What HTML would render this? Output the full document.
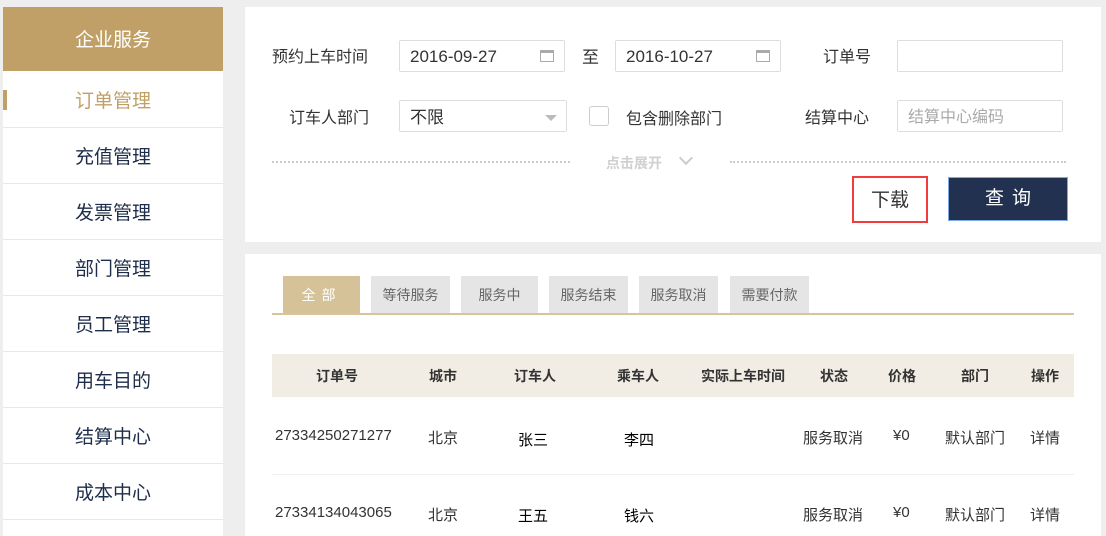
<!DOCTYPE html>
<html><head><meta charset="utf-8"><style>
*{margin:0;padding:0;box-sizing:border-box}
html{width:1106px;height:536px;overflow:hidden}
body{width:1106px;height:536px;background:#eeeeee;position:relative;overflow:hidden;font-family:"Liberation Sans","Noto Sans CJK SC",sans-serif;color:#333}
.a{position:absolute}
.side{left:3px;top:7px;width:220px;height:540px;background:#fff}
.sh{left:3px;top:7px;width:220px;height:64px;background:#c0a067;color:#fff;font-size:19px;text-align:center;line-height:68px}
.si{left:3px;width:220px;height:56px;border-bottom:1px solid #e8e8e8;text-align:center;line-height:59px;font-size:19px;color:#1e2d4a}
.p{background:#fff;left:245px;width:856px}
.lbl{font-size:16px;color:#333}
.inp{border:1px solid #ddd;border-radius:2px;height:32px;background:#fff;font-size:17px;line-height:31px;padding-left:10px;color:#333}
.cal{position:absolute;right:10px;top:9px;width:14px;height:12px;border:1px solid #aaa;border-top:3px solid #aaa}
.dots{border-top:2px dotted #ccc;height:0}
.tab{top:276px;height:37px;background:#e5e5e5;color:#666;font-size:14px;text-align:center;line-height:38px}
.th{top:354px;font-size:14px;font-weight:bold;color:#333;line-height:45px;transform:translateX(-50%)}
.td{font-size:15px;color:#333}
</style></head><body>
<div class="a side"></div>
<div class="a sh">企业服务</div>
<div class="a si" style="top:72px;color:#c0a067">订单管理</div>
<div class="a" style="left:3px;top:90px;width:4px;height:20px;background:#c0a067"></div>
<div class="a si" style="top:128px">充值管理</div>
<div class="a si" style="top:184px">发票管理</div>
<div class="a si" style="top:240px">部门管理</div>
<div class="a si" style="top:296px">员工管理</div>
<div class="a si" style="top:352px">用车目的</div>
<div class="a si" style="top:408px">结算中心</div>
<div class="a si" style="top:464px">成本中心</div>

<div class="a p" style="top:7px;height:235px"></div>
<div class="a lbl" style="left:272px;top:43px">预约上车时间</div>
<div class="a inp" style="left:399px;top:40px;width:166px">2016-09-27<span class="cal"></span></div>
<div class="a lbl" style="left:582px;top:43px;font-size:17px">至</div>
<div class="a inp" style="left:615px;top:40px;width:166px">2016-10-27<span class="cal"></span></div>
<div class="a lbl" style="left:823px;top:43px">订单号</div>
<div class="a inp" style="left:897px;top:40px;width:166px"></div>
<div class="a lbl" style="left:289px;top:104px">订车人部门</div>
<div class="a inp" style="left:399px;top:100px;width:168px;line-height:33px">不限<span style="position:absolute;right:9px;top:14px;border:6px solid transparent;border-top:6px solid #bbb;border-bottom:0"></span></div>
<div class="a" style="left:589px;top:106px;width:20px;height:20px;border:1px solid #ccc;border-radius:3px"></div>
<div class="a lbl" style="left:626px;top:105px">包含删除部门</div>
<div class="a lbl" style="left:805px;top:104px">结算中心</div>
<div class="a inp" style="left:897px;top:100px;width:166px;color:#aaa;font-size:16px;line-height:33px">结算中心编码</div>
<div class="a dots" style="left:272px;top:161px;width:298px"></div>
<div class="a dots" style="left:730px;top:161px;width:336px"></div>
<div class="a" style="left:606px;top:153px;font-size:14px;color:#d0d0d0;font-weight:bold">点击展开</div>
<div class="a" style="left:681px;top:153px;width:10px;height:10px;border-right:2px solid #ccc;border-bottom:2px solid #ccc;transform:rotate(45deg)"></div>
<div class="a" style="left:852px;top:176px;width:76px;height:47px;border:2px solid #f03c3c;text-align:center;line-height:45px;font-size:19px;color:#333">下载</div>
<div class="a" style="left:948px;top:177px;width:120px;height:44px;background:#22314f;border:1px solid #7fa8e8;color:#fff;text-align:center;line-height:42px;font-size:19px;letter-spacing:8px;text-indent:8px">查询</div>

<div class="a p" style="top:254px;height:290px"></div>
<div class="a tab" style="left:283px;width:77px;background:#d6c299;color:#fff;letter-spacing:6px">全部</div>
<div class="a tab" style="left:371px;width:79px">等待服务</div>
<div class="a tab" style="left:461px;width:77px">服务中</div>
<div class="a tab" style="left:549px;width:79px">服务结束</div>
<div class="a tab" style="left:639px;width:79px">服务取消</div>
<div class="a tab" style="left:730px;width:79px">需要付款</div>
<div class="a" style="left:272px;top:313px;width:802px;height:2px;background:#d8c49a"></div>
<div class="a" style="left:272px;top:354px;width:802px;height:43px;background:#f2ede4"></div>
<div class="a th" style="left:337px">订单号</div>
<div class="a th" style="left:443px">城市</div>
<div class="a th" style="left:535px">订车人</div>
<div class="a th" style="left:638px">乘车人</div>
<div class="a th" style="left:743px">实际上车时间</div>
<div class="a th" style="left:834px">状态</div>
<div class="a th" style="left:902px">价格</div>
<div class="a th" style="left:975px">部门</div>
<div class="a th" style="left:1045px">操作</div>
<div class="a" style="left:272px;top:474px;width:802px;height:1px;background:#f0f0f0"></div>
<div class="a td" style="left:275px;top:427px">27334250271277</div>
<div class="a td" style="left:428px;top:427px">北京</div>
<div class="a td" style="left:518px;top:429px;color:#000">张三</div>
<div class="a td" style="left:624px;top:429px;color:#000">李四</div>
<div class="a td" style="left:803px;top:427px">服务取消</div>
<div class="a td" style="left:893px;top:427px">¥0</div>
<div class="a td" style="left:945px;top:427px">默认部门</div>
<div class="a td" style="left:1030px;top:427px">详情</div>
<div class="a td" style="left:275px;top:504px">27334134043065</div>
<div class="a td" style="left:428px;top:504px">北京</div>
<div class="a td" style="left:518px;top:505px;color:#000">王五</div>
<div class="a td" style="left:624px;top:505px;color:#000">钱六</div>
<div class="a td" style="left:803px;top:504px">服务取消</div>
<div class="a td" style="left:893px;top:504px">¥0</div>
<div class="a td" style="left:945px;top:504px">默认部门</div>
<div class="a td" style="left:1030px;top:504px">详情</div>
</body></html>
